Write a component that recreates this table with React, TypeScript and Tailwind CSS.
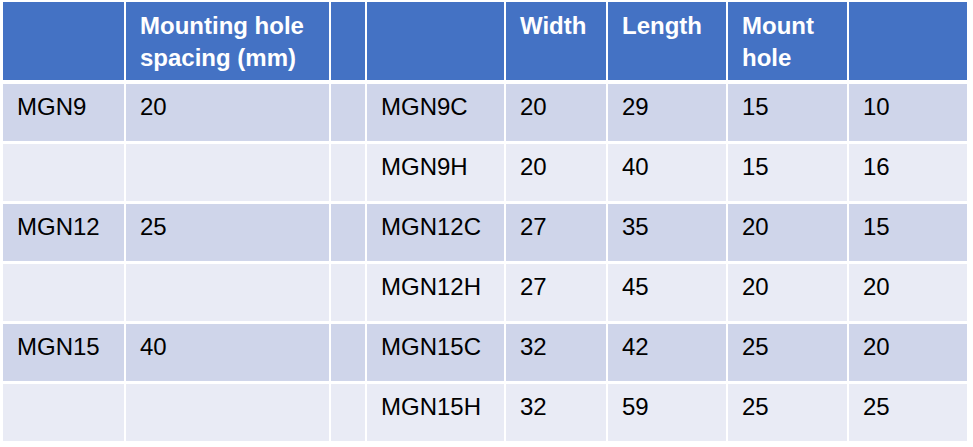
import React from "react";

const cols = "grid grid-cols-[121px_203px_34px_137px_100px_118px_119px_118px] gap-x-[2px]";

const rows: string[][] = [
  ["MGN9", "20", "", "MGN9C", "20", "29", "15", "10"],
  ["", "", "", "MGN9H", "20", "40", "15", "16"],
  ["MGN12", "25", "", "MGN12C", "27", "35", "20", "15"],
  ["", "", "", "MGN12H", "27", "45", "20", "20"],
  ["MGN15", "40", "", "MGN15C", "32", "42", "25", "20"],
  ["", "", "", "MGN15H", "32", "59", "25", "25"],
];

const header = ["", "Mounting hole spacing (mm)", "", "", "Width", "Length", "Mount hole", ""];

export default function App() {
  return (
    <div
      className="w-[973px] h-[447px] bg-white pl-[3px] pt-[2px] overflow-hidden"
      style={{ fontFamily: '"Liberation Sans", Arial, sans-serif' }}
    >
      <div className={`${cols} h-[78px]`}>
        {header.map((h, i) => (
          <div
            key={i}
            className="bg-[#4472c4] text-white font-bold text-[24px] leading-[32px] pt-[8px] pl-[14px] pr-[4px]"
          >
            {h}
          </div>
        ))}
      </div>
      <div className="mt-[4px] flex flex-col gap-y-[3px]">
        {rows.map((r, ri) => (
          <div key={ri} className={`${cols} h-[57px]`}>
            {r.map((c, ci) => (
              <div
                key={ci}
                className={`${ri % 2 === 0 ? "bg-[#cfd5ea]" : "bg-[#e9ebf5]"} text-black text-[24px] leading-[32px] pt-[7px] pl-[14px]`}
              >
                {c}
              </div>
            ))}
          </div>
        ))}
      </div>
    </div>
  );
}
